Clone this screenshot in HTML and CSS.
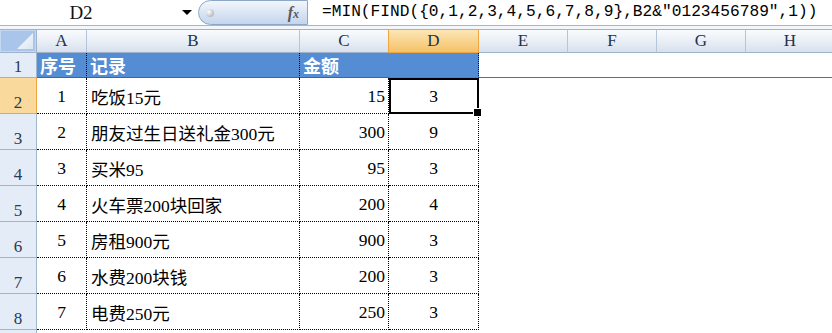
FILE: index.html
```html
<html>
    <head>
        <meta charset="utf-8">
        <title>记录</title>
        <link rel="stylesheet" href="styles.css">
    </head>
    <body class="body">
        <div class="formula-bar">
            <div class="name-box"><span class="name">D2</span><span class="arrow"></span></div>
            <div class="fx-btn"><span class="knob"></span><span class="fx">f<small>x</small></span></div>
            <div class="formula">=MIN(FIND({0,1,2,3,4,5,6,7,8,9},B2&amp;"0123456789",1))</div>
        </div>
        <div class="bar-gap"></div>
        <div class="sheet">
            <div class="corner"></div>
            <div class="ch">A</div>
            <div class="ch">B</div>
            <div class="ch">C</div>
            <div class="ch sel">D</div>
            <div class="ch">E</div>
            <div class="ch">F</div>
            <div class="ch">G</div>
            <div class="ch">H</div>

            <div class="rh">1</div>
            <div class="hd dl">序号</div>
            <div class="hd dl">记录</div>
            <div class="hd">金额</div>
            <div class="hd dl seld"></div>
            <div class="e1"></div><div class="e1"></div><div class="e1"></div><div class="e1"></div>

            <div class="rh sel">2</div>
            <div class="c num">1</div>
            <div class="c txt">吃饭15元</div>
            <div class="c amt">15</div>
            <div class="c num act">3</div>
            <div></div><div></div><div></div><div></div>

            <div class="rh">3</div>
            <div class="c num">2</div>
            <div class="c txt">朋友过生日送礼金300元</div>
            <div class="c amt">300</div>
            <div class="c num">9</div>
            <div></div><div></div><div></div><div></div>

            <div class="rh">4</div>
            <div class="c num">3</div>
            <div class="c txt">买米95</div>
            <div class="c amt">95</div>
            <div class="c num">3</div>
            <div></div><div></div><div></div><div></div>

            <div class="rh">5</div>
            <div class="c num">4</div>
            <div class="c txt">火车票200块回家</div>
            <div class="c amt">200</div>
            <div class="c num">4</div>
            <div></div><div></div><div></div><div></div>

            <div class="rh">6</div>
            <div class="c num">5</div>
            <div class="c txt">房租900元</div>
            <div class="c amt">900</div>
            <div class="c num">3</div>
            <div></div><div></div><div></div><div></div>

            <div class="rh">7</div>
            <div class="c num">6</div>
            <div class="c txt">水费200块钱</div>
            <div class="c amt">200</div>
            <div class="c num">3</div>
            <div></div><div></div><div></div><div></div>

            <div class="rh">8</div>
            <div class="c num">7</div>
            <div class="c txt">电费250元</div>
            <div class="c amt">250</div>
            <div class="c num">3</div>
            <div></div><div></div><div></div><div></div>

            <div class="rh"></div>
            <div></div><div></div><div></div><div></div>
            <div></div><div></div><div></div><div></div>
        </div>
    </body>
</html>
```

FILE: styles.css
```css
.body{
    margin:0;
    width:832px;
    height:333px;
    overflow:hidden;
    background:#fff;
    font-family:"Liberation Serif","Noto Sans CJK SC",serif;
}
*{
    box-sizing:border-box;
}

/* formula bar */
.formula-bar{
    display:flex;
    height:26px;
    border-bottom:1px solid #a9b6c6;
    background:#fff;
    overflow:hidden;
}
.name-box{
    width:198px;
    flex-shrink:0;
    display:flex;
    align-items:center;
}
.name{
    flex:1;
    text-align:center;
    padding-right:20px;
    font-size:19px;
    color:#111;
}
.arrow{
    width:0;
    height:0;
    border-left:5px solid transparent;
    border-right:5px solid transparent;
    border-top:5px solid #000;
    margin-right:6px;
}
.fx-btn{
    width:110px;
    height:25px;
    flex-shrink:0;
    border:1px solid #8fa7c6;
    border-radius:13px 0 0 13px;
    background:linear-gradient(#f3f7fc,#dde7f4 45%,#c4d5ec);
    display:flex;
    align-items:center;
    justify-content:space-between;
    padding:0 8px 0 7px;
}
.knob{
    width:8px;
    height:8px;
    border-radius:50%;
    background:radial-gradient(circle at 35% 35%,#ffffff,#b9bec6 70%,#8d949e);
}
.fx{
    font-style:italic;
    font-size:16px;
    color:#5a5a5a;
    font-weight:bold;
}
.fx small{
    font-size:12px;
}
.formula{
    padding-left:14px;
    font-family:"Liberation Mono",monospace;
    font-size:16.2px;
    line-height:25px;
    white-space:nowrap;
    color:#000;
}
.bar-gap{
    height:3px;
    background:#f3f6fa;
}

/* grid */
.sheet{
    display:grid;
    grid-template-columns:37px 50px 213px 89px 90px 89px 89px 89px 89px;
    grid-template-rows:24px 25px repeat(8,36px);
}
.corner{
    position:relative;
    background:#a9c5ea;
    border:1px solid #9fb2cb;
    border-left:none;
    box-shadow:inset 0 0 0 1px #c4d8f2;
}
.corner::after{
    content:"";
    position:absolute;
    right:3px;
    bottom:3px;
    width:16px;
    height:16px;
    background:linear-gradient(135deg,#ffffff,#d9e5f5);
    clip-path:polygon(100% 0,100% 100%,0 100%);
}
.ch{
    border-top:1px solid #9fb2cb;
    border-bottom:1px solid #9fb2cb;
    border-right:1px solid #b3c5db;
    background:linear-gradient(#f9fbfd,#eaeff6 50%,#d7e0ec);
    display:flex;
    align-items:center;
    justify-content:center;
    font-size:17px;
    color:#22324a;
}
.ch.sel{
    background:linear-gradient(#fde6b6,#f9d48e 50%,#f4c168);
    border-color:#f0a540;
    box-shadow:-1px 0 0 #f0a540;
}
.rh{
    background:#e4ecf7;
    border-right:1px solid #9eb6ce;
    border-bottom:1px solid #9eb6ce;
    display:flex;
    align-items:flex-end;
    justify-content:center;
    padding-bottom:2px;
    font-size:17px;
    line-height:17px;
    color:#2a3a50;
}
.rh.sel{
    background:#f9d99c;
    border-color:#f0a540;
    box-shadow:0 -1px 0 #f0a540;
}
.hd{
    background:#548dd4;
    color:#fff;
    font-family:"Noto Sans CJK SC",sans-serif;
    font-weight:bold;
    font-size:18px;
    border-bottom:1px solid #5f5f5f;
    padding-left:3px;
    display:flex;
    align-items:center;
}
.hd.dl{
    border-right:1px dotted #000;
}
.hd.seld{
    border-bottom-color:#a9752f;
}
.e1{
    border-bottom:1px solid #6b6b6b;
}
.c{
    border-right:1px dotted #000;
    border-bottom:1px dotted #000;
    display:flex;
    align-items:center;
    padding-top:2px;
    font-size:17.5px;
    color:#000;
    white-space:nowrap;
}
.num{
    justify-content:center;
}
.txt{
    padding-left:4px;
}
.amt{
    justify-content:flex-end;
    padding-right:3px;
}
.act{
    position:relative;
}
.act::after{
    content:"";
    position:absolute;
    left:0;
    top:0;
    right:-1px;
    bottom:-1px;
    border:2px solid #000;
}
.act::before{
    content:"";
    position:absolute;
    right:-4px;
    bottom:-4px;
    width:7px;
    height:7px;
    background:#000;
    border:1px solid #fff;
    z-index:2;
}
```
